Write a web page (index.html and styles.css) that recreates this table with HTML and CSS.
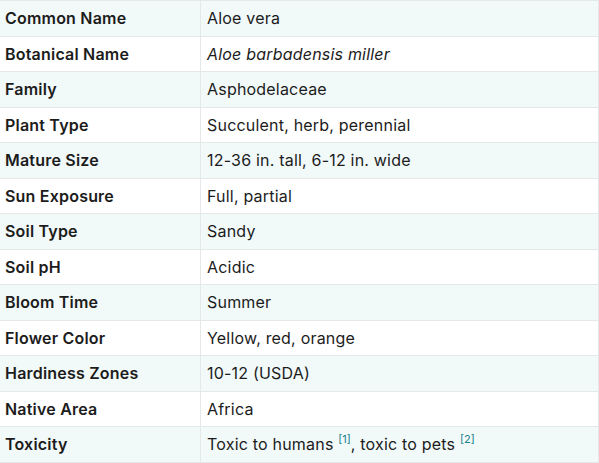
FILE: index.html
```html
<!DOCTYPE html>
<html>
<head>
<meta charset="utf-8">
<link rel="stylesheet" href="styles.css">
</head>
<body>
<table class="facts">
<tbody>
<tr><th>Common Name</th><td>Aloe vera</td></tr>
<tr><th>Botanical Name</th><td><em>Aloe barbadensis miller</em></td></tr>
<tr><th>Family</th><td>Asphodelaceae</td></tr>
<tr><th>Plant Type</th><td>Succulent, herb, perennial</td></tr>
<tr><th>Mature Size</th><td>12-36 in. tall, 6-12 in. wide</td></tr>
<tr><th>Sun Exposure</th><td>Full, partial</td></tr>
<tr><th>Soil Type</th><td>Sandy</td></tr>
<tr><th>Soil pH</th><td>Acidic</td></tr>
<tr><th>Bloom Time</th><td>Summer</td></tr>
<tr><th>Flower Color</th><td>Yellow, red, orange</td></tr>
<tr><th>Hardiness Zones</th><td>10-12 (USDA)</td></tr>
<tr><th>Native Area</th><td>Africa</td></tr>
<tr><th>Toxicity</th><td>Toxic to humans <sup class="ref">[1]</sup>, toxic to pets <sup class="ref">[2]</sup></td></tr>
</tbody>
</table>
</body>
</html>
```
FILE: styles.css
```css
html, body {
  margin: 0;
  padding: 0;
  background: #ffffff;
}
.facts {
  border-collapse: collapse;
  width: 601px;
  margin-left: -2px;
  font-family: Inter, "Noto Sans", sans-serif;
  font-size: 16px;
  line-height: 24px;
  letter-spacing: 0.2px;
  color: #1c1c1c;
}
.facts th,
.facts td {
  border: 1px solid #e4e8e8;
  padding: 5px 6px 5.5px;
  text-align: left;
  vertical-align: middle;
}
.facts th {
  width: 189px;
  font-weight: 600;
}
.facts tr:nth-child(odd) {
  background: #f1f9f9;
}
.facts em {
  font-style: italic;
}
.ref {
  color: #1a7f8e;
  font-size: 11px;
  line-height: 0;
  vertical-align: 7px;
  letter-spacing: 0;
}
```
